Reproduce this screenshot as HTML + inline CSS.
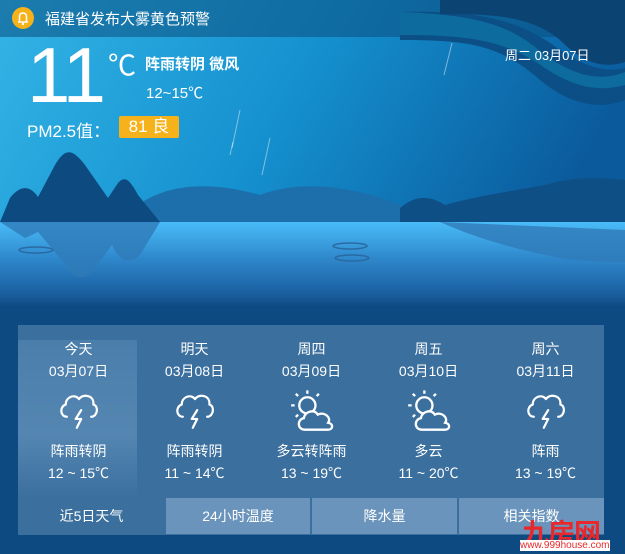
<!DOCTYPE html>
<html><head><meta charset="utf-8"><style>
body{margin:0;width:625px;height:554px;overflow:hidden;font-family:"Liberation Sans","Noto Sans CJK SC",sans-serif;color:#fff;background:#0e4a82;position:relative}
.abs{position:absolute}
.col{position:absolute;top:325px;width:117px;height:173px;text-align:center;font-size:14px}
.col div{position:absolute;left:0;width:117px}
.tab{position:absolute;top:498px;height:36px;line-height:36px;text-align:center;font-size:14px;background:#6a94bb}
</style></head><body>
<svg class="abs" style="left:0;top:0" width="625" height="325">
<defs>
<linearGradient id="sky" x1="0" y1="0" x2="1" y2="0.3"><stop offset="0" stop-color="#33b4e6"/><stop offset="0.5" stop-color="#1591cf"/><stop offset="1" stop-color="#0a5a9c"/></linearGradient>
<linearGradient id="wat" x1="0" y1="0" x2="0" y2="1"><stop offset="0" stop-color="#49bcf8"/><stop offset="0.35" stop-color="#2f88cc"/><stop offset="0.7" stop-color="#1a5f9f"/><stop offset="0.82" stop-color="#0e4a82"/><stop offset="1" stop-color="#0e4a82"/></linearGradient>
</defs>
<rect width="625" height="325" fill="url(#sky)"/>
<rect width="625" height="37" fill="#0b4f80" opacity="0.55"/>
<path d="M400 12 C480 10 520 20 560 50 C590 70 610 72 625 68 L625 100 C600 110 570 105 540 80 C500 45 470 40 400 40Z" fill="#0b4f86"/>
<path d="M400 12 C480 15 510 25 545 55 C580 80 605 80 625 72 L625 85 C600 92 575 88 545 68 C505 40 470 35 400 35Z" fill="#0d6fa0" opacity="0.9"/>
<path d="M440 0 L625 0 L625 62 C600 70 580 60 560 40 C530 15 490 14 440 14Z" fill="#0b4372"/>
<path d="M0 222 L625 222 L625 325 L0 325Z" fill="url(#wat)"/>
<path d="M120 222 C150 185 200 178 260 195 C300 180 350 185 400 205 L430 222Z" fill="#1d6fab"/>
<path d="M400 208 C415 195 430 195 445 205 C480 195 520 190 545 185 C580 175 600 178 625 180 L625 222 L400 222Z" fill="#0e4f86"/>
<path d="M0 222 L10 198 C20 185 30 185 38 197 L55 165 C65 148 72 148 85 165 L108 198 L118 183 C125 175 130 180 138 195 L160 222Z" fill="#0d4a80"/>
<path d="M0 222 L160 222 L140 255 C130 265 120 262 112 245 L95 268 C88 280 75 280 70 270 L38 232 L25 238 Z" fill="#2f7ab8" opacity="0.8"/>
<path d="M440 222 C480 240 520 250 560 258 C590 262 610 262 625 262 L625 230 Z" fill="#2f7ab8" opacity="0.8"/>
<g fill="none" stroke="#2a6aa3" stroke-width="1.5"><ellipse cx="36" cy="250" rx="17" ry="3"/><ellipse cx="350" cy="246" rx="17" ry="3"/><ellipse cx="352" cy="258" rx="17" ry="3"/></g>
<g stroke="#ffffff" stroke-opacity="0.45" stroke-width="1"><line x1="240" y1="110" x2="232" y2="148"/><line x1="270" y1="138" x2="262" y2="175"/><line x1="233" y1="142" x2="230" y2="155"/><line x1="452" y1="43" x2="444" y2="75"/></g>
</svg>
<svg class="abs" style="left:12px;top:7px" width="22" height="22"><circle cx="11" cy="11" r="11" fill="#f5b21a"/><path d="M6 15 L16 15 M7.5 14.5 L7.5 10 C7.5 7 9 6 11 6 C13 6 14.5 7 14.5 10 L14.5 14.5" stroke="#fff" stroke-width="1.5" fill="none"/><circle cx="11" cy="17" r="1.2" fill="#fff"/></svg>
<div class="abs" style="left:45px;top:8px;font-size:15px">福建省发布大雾黄色预警</div>
<div class="abs" style="left:27px;top:34px;font-size:78px;line-height:82px;font-weight:400;letter-spacing:-2px">11</div>
<div class="abs" style="left:108px;top:44px;font-size:28px">℃</div>
<div class="abs" style="left:145px;top:53px;font-size:15px;font-weight:bold">阵雨转阴 微风</div>
<div class="abs" style="left:146px;top:82px;font-size:15px">12~15℃</div>
<div class="abs" style="left:27px;top:117px;font-size:17px">PM2.5值：</div>
<div class="abs" style="left:119px;top:116px;width:60px;height:22px;background:#f5b21a;border-radius:2px;font-size:17px;line-height:22px;text-align:center">81 良</div>
<div class="abs" style="left:505px;top:45px;font-size:13px">周二 03月07日</div>
<div class="abs" style="left:18px;top:325px;width:586px;height:210px;background:#3b6f9e"></div>
<div class="abs" style="left:18px;top:340px;width:119px;height:158px;background:linear-gradient(#4b7eab,#5586b2 60%,#3b6f9e)"></div>
<svg width="0" height="0" style="position:absolute"><defs>
<g id="st" fill="none" stroke="#fff" stroke-width="2" stroke-linejoin="round" stroke-linecap="round"><path d="M8 26 C2 26 1 17 7 15 C7 8 15 5 19 10 C22 5 33 6 32 15 C37 16 36 26 30 26"/><path d="M21 20 L16 28 L21 28 L17 36"/></g>
<g id="pc" fill="none" stroke="#fff" stroke-width="2"><circle cx="15" cy="15" r="7"/><path d="M15 2 V5 M5 5 L7 7 M25 5 L23 7 M1 15 H4 M5 25 L7 23"/><path d="M13 36 C6 36 6 27 12 26 C13 20 21 18 24 23 C30 20 36 26 33 30 C38 31 37 36 33 36Z" fill="#3b6f9e"/></g>
</defs></svg>
<div class="col" style="left:20px"><div style="top:14px">今天</div><div style="top:36px">03月07日</div><svg style="position:absolute;left:38px;top:63px" width="42" height="42" viewBox="0 0 38 38"><use href="#st"/></svg><div style="top:116px">阵雨转阴</div><div style="top:138px">12 ~ 15℃</div></div>
<div class="col" style="left:136px"><div style="top:14px">明天</div><div style="top:36px">03月08日</div><svg style="position:absolute;left:38px;top:63px" width="42" height="42" viewBox="0 0 38 38"><use href="#st"/></svg><div style="top:116px">阵雨转阴</div><div style="top:138px">11 ~ 14℃</div></div>
<div class="col" style="left:253px"><div style="top:14px">周四</div><div style="top:36px">03月09日</div><svg style="position:absolute;left:36px;top:63px" width="46" height="44" viewBox="0 0 38 38"><use href="#pc"/></svg><div style="top:116px">多云转阵雨</div><div style="top:138px">13 ~ 19℃</div></div>
<div class="col" style="left:370px"><div style="top:14px">周五</div><div style="top:36px">03月10日</div><svg style="position:absolute;left:36px;top:63px" width="46" height="44" viewBox="0 0 38 38"><use href="#pc"/></svg><div style="top:116px">多云</div><div style="top:138px">11 ~ 20℃</div></div>
<div class="col" style="left:487px"><div style="top:14px">周六</div><div style="top:36px">03月11日</div><svg style="position:absolute;left:38px;top:63px" width="42" height="42" viewBox="0 0 38 38"><use href="#st"/></svg><div style="top:116px">阵雨</div><div style="top:138px">13 ~ 19℃</div></div>
<div class="tab" style="left:18px;width:147px;background:#3b6f9e">近5日天气</div>
<div class="tab" style="left:166px;width:144px">24小时温度</div>
<div class="tab" style="left:312px;width:145px">降水量</div>
<div class="tab" style="left:459px;width:145px">相关指数</div>
<div class="abs" style="left:522px;top:512px;font-size:27px;font-weight:bold;color:#e8282a;letter-spacing:-1px">九房网</div>
<div class="abs" style="left:520px;top:540px;font-size:10px;color:#e8282a;background:#fff">www.999house.com</div>
</body></html>
